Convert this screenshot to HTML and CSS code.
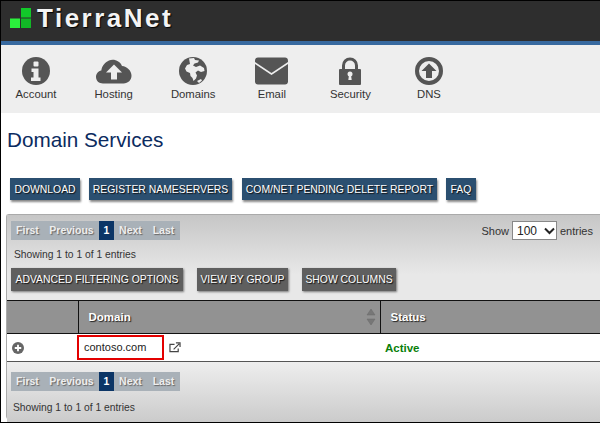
FILE: index.html
```html
<!DOCTYPE html>
<html lang="en">
<head>
    <meta charset="UTF-8">
    <meta name="viewport" content="width=device-width, initial-scale=1.0">
    <title>Domain Services</title>
    <link rel="stylesheet" href="styles.css">
</head>
<body>
    <div class="frame">
        <header class="topbar">
            <svg class="logo-mark" width="21" height="20" viewBox="0 0 21 20">
                <rect x="11" y="0" width="10" height="9.500" fill="#12c92a"/>
                <rect x="0" y="10.500" width="10" height="9.500" fill="#2bf03c"/>
                <rect x="11" y="10.500" width="10" height="9.500" fill="#12b826"/>
            </svg>
            <span class="logo-text">TierraNet</span>
        </header>

        <nav class="nav">
            <a class="nav-item">
                <svg width="28" height="28" viewBox="0 0 28 28">
                    <circle cx="14" cy="14" r="14" fill="#555"/>
                    <rect x="11.500" y="4.500" width="5" height="5" rx="1" fill="#eee"/>
                    <path d="M9.500 11.500h7v9h2v3.500h-9.500v-3.500h2.500v-5.500h-2z" fill="#eee"/>
                </svg>
                <span>Account</span>
            </a>
            <a class="nav-item nav-hosting">
                <svg width="36" height="28" viewBox="0 0 36 28">
                    <path d="M7 26.500c-4 0-7-2.800-7-6.500 0-3.200 2.200-5.800 5.300-6.400C6 8.500 9.500 5 13 3.500c5-2 11 .5 13 5.500 5 .5 9.500 4.700 9.500 9.800 0 4.200-3.300 7.700-8 7.700z" fill="#555"/>
                    <path d="M18 7.500l8 8h-5v7h-6v-7h-5z" fill="#eee"/>
                </svg>
                <span>Hosting</span>
            </a>
            <a class="nav-item">
                <svg width="28" height="28" viewBox="0 0 28 28">
                    <circle cx="14" cy="14" r="14" fill="#555"/>
                    <path d="M10 1.500l5-.5 1 2 4 .5-1 2-3.500 1-1.500 2 3 1.500 4-1.500 4 2.500.500 3-3.500 1-3-1.500-2.500 2 1.500 3-1 3-2.500 2.500-1-3-2-2-.5-3-3.500-1.500-1.500-3 2-3.500 3-1z" fill="#eee"/>
                    <path d="M18 24l4-2 1 1.500-3 2.500z" fill="#eee"/>
                </svg>
                <span>Domains</span>
            </a>
            <a class="nav-item">
                <svg width="33" height="27" viewBox="0 0 33 27">
                    <path d="M3 0h27c1.700 0 3 1.300 3 3v1.500L16.500 15.500 0 4.500V3c0-1.700 1.300-3 3-3z" fill="#555"/>
                    <path d="M0 6.500l16.500 11L33 6.500V24c0 1.700-1.300 3-3 3H3c-1.700 0-3-1.300-3-3z" fill="#555"/>
                </svg>
                <span>Email</span>
            </a>
            <a class="nav-item">
                <svg width="22" height="28" viewBox="0 0 22 28">
                    <path d="M4.500 12V8.500a6.500 6.500 0 0 1 13 0V12" fill="none" stroke="#555" stroke-width="3"/>
                    <rect x="0" y="12" width="22" height="16" rx="1" fill="#555"/>
                    <circle cx="11" cy="17" r="2.500" fill="#eee"/>
                    <path d="M10 18h2l.7 5h-3.400z" fill="#eee"/>
                </svg>
                <span>Security</span>
            </a>
            <a class="nav-item">
                <svg width="28" height="28" viewBox="0 0 28 28">
                    <circle cx="14" cy="14" r="12" fill="#eee" stroke="#555" stroke-width="4"/>
                    <path d="M14 6.500l7.500 7.500h-4.500v7h-6v-7H6.500z" fill="#555"/>
                </svg>
                <span>DNS</span>
            </a>
        </nav>

        <main class="content">
            <h1 class="title">Domain Services</h1>

            <div class="actions">
                <button class="btn btn-blue btn-download">DOWNLOAD</button>
                <button class="btn btn-blue btn-register">REGISTER NAMESERVERS</button>
                <button class="btn btn-blue btn-report">COM/NET PENDING DELETE REPORT</button>
                <button class="btn btn-blue btn-faq">FAQ</button>
            </div>

            <section class="panel">
                <div class="panel-top">
                    <div class="top-row">
                        <div class="pager">
                            <span class="page page-short">First</span>
                            <span class="page page-long">Previous</span>
                            <span class="page current">1</span>
                            <span class="page page-short">Next</span>
                            <span class="page page-short">Last</span>
                        </div>
                        <div class="length">
                            Show
                            <span class="select">100
                                <svg width="11" height="8" viewBox="0 0 11 8"><path d="M1 1.500l4.500 4.500L10 1.500" fill="none" stroke="#222" stroke-width="2"/></svg>
                            </span>
                            entries
                        </div>
                    </div>
                    <div class="info">Showing 1 to 1 of 1 entries</div>
                    <div class="tools">
                        <button class="btn btn-gray btn-filter">ADVANCED FILTERING OPTIONS</button>
                        <button class="btn btn-gray btn-group">VIEW BY GROUP</button>
                        <button class="btn btn-gray btn-columns">SHOW COLUMNS</button>
                    </div>
                </div>

                <table class="grid">
                    <thead>
                        <tr>
                            <th class="col-toggle"></th>
                            <th class="col-domain">
                                <div class="th-inner">Domain
                                    <svg width="10" height="18" viewBox="0 0 10 18"><path d="M5 1l4 6H1zM5 17l4-6H1z" fill="#777" stroke="#6a6a6a" stroke-width=".5"/></svg>
                                </div>
                            </th>
                            <th class="col-status">Status</th>
                        </tr>
                    </thead>
                    <tbody>
                        <tr>
                            <td class="col-toggle">
                                <svg class="plus" width="12" height="12" viewBox="0 0 13 13"><circle cx="6.500" cy="6.500" r="6.500" fill="#666"/><path d="M6.500 3v7M3 6.500h7" stroke="#fff" stroke-width="2"/></svg>
                            </td>
                            <td class="col-domain">
                                <div class="domain-cell">
                                    <span class="domain-box">contoso.com</span>
                                    <svg class="ext" width="12" height="11" viewBox="0 0 13 12"><path d="M10 7v3.500H1V2.500h5" fill="none" stroke="#444" stroke-width="1.300"/><path d="M5 8l6-6M7.500 1H12v4.500" fill="none" stroke="#444" stroke-width="1.300"/></svg>
                                </div>
                            </td>
                            <td class="status-active">Active</td>
                        </tr>
                    </tbody>
                </table>

                <div class="panel-bottom">
                    <div class="pager">
                        <span class="page page-short">First</span>
                        <span class="page page-long">Previous</span>
                        <span class="page current">1</span>
                        <span class="page page-short">Next</span>
                        <span class="page page-short">Last</span>
                    </div>
                    <div class="info info-bottom">Showing 1 to 1 of 1 entries</div>
                </div>
            </section>
        </main>
    </div>
</body>
</html>
```

FILE: styles.css
```css
* {
    box-sizing: border-box;
}
body {
    margin: 0;
    background-color: #fff;
    font-family: "Liberation Sans", Arial, sans-serif;
    font-size: 11px;
    color: #333;
}
.frame {
    width: 600px;
    height: 423px;
    overflow: hidden;
    border-top: 1px solid #000;
    border-left: 1px solid #000;
    border-bottom: 1px solid #000;
}
.topbar {
    height: 44px;
    display: flex;
    align-items: flex-start;
    padding: 7px 0 0 9px;
    background-color: #2e2e2e;
    border-bottom: 4px solid #37699f;
}
.logo-mark {
    margin-right: 6px;
}
.logo-text {
    color: #f4f4f4;
    font-size: 26px;
    line-height: 21px;
    font-weight: bold;
    letter-spacing: 2.500px;
    text-shadow: 1px 1px 1px #000;
}
.nav {
    height: 68px;
    display: flex;
    gap: 8.600px;
    padding-top: 12px;
    background-color: #eee;
}
.nav-item {
    width: 70px;
    display: flex;
    flex-direction: column;
    align-items: center;
    color: #333;
    font-size: 11.300px;
}
.nav-item svg {
    height: 28px;
    margin-bottom: 3px;
}
.nav-hosting {
    padding-right: 2px;
}
.title {
    margin: 0;
    padding: 14px 0 0 6px;
    height: 65px;
    color: #0b2b60;
    font-size: 20.700px;
    line-height: 26px;
    font-weight: normal;
}
.actions {
    display: flex;
    padding-left: 9px;
}
.btn {
    height: 22px;
    padding: 0;
    border: none;
    color: #fff;
    font-family: inherit;
    font-size: 10.400px;
    white-space: nowrap;
    text-shadow: 1px 1px 1px #111;
    box-shadow: 1px 2px 2px #888;
}
.btn-blue {
    background-color: #2b4f70;
}
.btn-download {
    width: 70px;
    margin-right: 9px;
}
.btn-register {
    width: 143px;
    margin-right: 10px;
}
.btn-report {
    width: 195px;
    margin-right: 9px;
}
.btn-faq {
    width: 30px;
}
.panel {
    margin: 14px 0 0 5px;
    height: 205px;
    border-top: 1px solid #aaa;
    border-left: 1px solid #aaa;
    border-bottom: 1px solid #aaa;
    border-radius: 3px 0 0 3px;
}
.panel-top {
    height: 85px;
    padding: 6px 7px 0 4px;
    background: linear-gradient(#c6c6c6, #e8e8e8 70%);
}
.top-row {
    display: flex;
    justify-content: space-between;
    align-items: center;
}
.pager {
    display: flex;
    width: 169px;
    height: 19px;
    background-color: #a9b1b8;
}
.page {
    color: #eee;
    font-size: 10.500px;
    line-height: 19px;
    font-weight: bold;
    text-align: center;
    text-shadow: 1px 1px 1px #666;
}
.page-short {
    width: 33px;
}
.page-long {
    width: 55px;
}
.page.current {
    width: 15px;
    background-color: #0b3566;
    color: #fff;
    text-shadow: none;
}
.length {
    display: flex;
    align-items: center;
    gap: 3px;
    color: #333;
    font-size: 11px;
}
.select {
    width: 45px;
    height: 19px;
    display: flex;
    align-items: center;
    gap: 7px;
    padding-left: 4px;
    background-color: #fff;
    border: 1px solid #888;
    color: #222;
    font-size: 12px;
}
.info {
    padding: 8px 0 0 3px;
    color: #333;
    font-size: 10.300px;
    line-height: 13px;
}
.info-bottom {
    padding: 10px 0 0 2px;
}
.tools {
    display: flex;
    gap: 14px;
    margin-top: 7px;
}
.btn-gray {
    height: 23px;
    background-color: #5f5f5f;
    box-shadow: 1px 1px 2px #777;
}
.btn-filter {
    width: 172px;
}
.btn-group {
    width: 91px;
}
.btn-columns {
    width: 94px;
}
.grid {
    width: 100%;
    table-layout: fixed;
    border-collapse: collapse;
    background-color: #fff;
}
.grid th {
    height: 33px;
    padding: 0 0 0 10px;
    background-color: #929292;
    border-top: 1px solid #111;
    border-bottom: 1px solid #111;
    color: #fff;
    font-size: 11.500px;
    text-align: left;
    text-shadow: 1px 1px 1px #222;
}
.grid th + th {
    border-left: 1px solid #111;
}
.col-toggle {
    width: 71px;
}
.col-domain {
    width: 302px;
}
.th-inner {
    display: flex;
    justify-content: space-between;
    align-items: center;
    padding-right: 4px;
}
.grid td {
    height: 28px;
    padding: 0;
    border-bottom: 1px solid #555;
    font-size: 11.500px;
}
.plus {
    display: block;
    margin-left: 5px;
}
.domain-cell {
    display: flex;
    align-items: center;
    gap: 5px;
}
.domain-box {
    width: 87px;
    height: 25px;
    margin-left: -1px;
    padding-left: 5px;
    border: 2px solid #e30000;
    color: #222;
    font-size: 11px;
    line-height: 21px;
}
.grid td.status-active {
    padding-left: 5px;
    color: #0a7f0a;
    font-weight: bold;
}
.panel-bottom {
    height: 60px;
    padding: 10px 4px 0;
    background: linear-gradient(#eee, #cbcbcb);
}
```
